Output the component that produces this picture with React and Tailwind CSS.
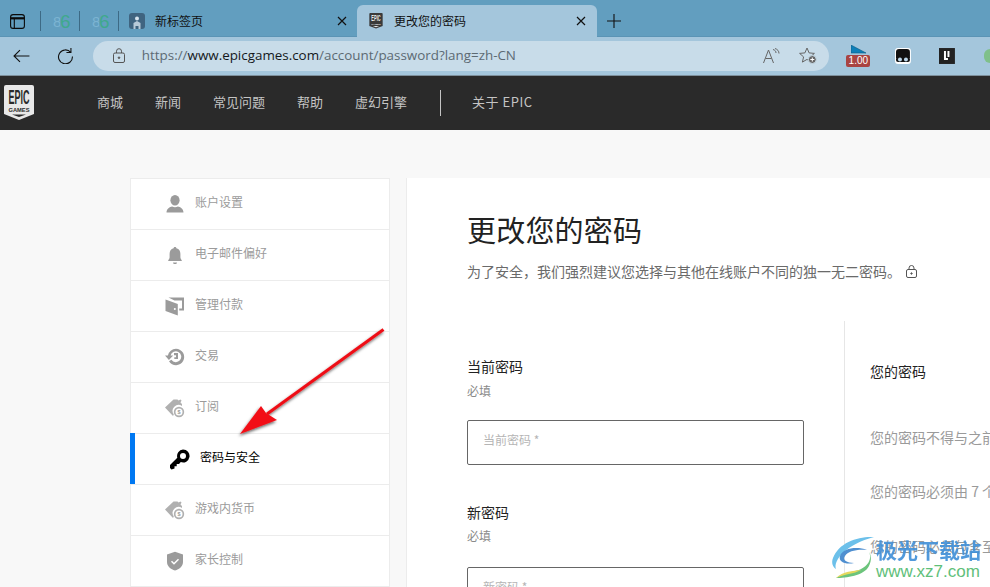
import React from "react";

const cjk = '"Noto Sans CJK SC","Liberation Sans",sans-serif';

function EpicLogo({ w = 30, h = 36, dark = false }) {
  const bg = dark ? "#3a3a3a" : "#e8e8e8";
  const fg = dark ? "#e8e8e8" : "#2a2a2a";
  return (
    <svg width={w} height={h} viewBox="0 0 30 36" className="block">
      <path d="M2 0h26a2 2 0 0 1 2 2v27l-15 6-15-6V2a2 2 0 0 1 2-2z" fill={bg} />
      <text x="15" y="19" textAnchor="middle" fontFamily="Liberation Sans" fontWeight="700" fontSize="20" textLength="21" lengthAdjust="spacingAndGlyphs" fill={fg}>EPIC</text>
      <text x="15" y="26.500" textAnchor="middle" fontFamily="Liberation Sans" fontWeight="700" fontSize="5.500" textLength="21" lengthAdjust="spacingAndGlyphs" fill={fg}>GAMES</text>
      <path d="M8 29.500h14l-7 2.600z" fill={fg} />
    </svg>
  );
}

const Ic = ({ children, w = 20, h = 20 }) => (
  <svg width={w} height={h} viewBox="0 0 20 20" fill="#9b9b9b" className="block">{children}</svg>
);

const UserIc = () => (
  <Ic>
    <ellipse cx="10" cy="6.200" rx="4.600" ry="5.200" />
    <path d="M1.500 18.500c0-4 3.400-5.600 5.600-6.100 1.800 1.100 4 1.100 5.800 0 2.200.5 5.600 2.100 5.600 6.100z" />
  </Ic>
);
const BellIc = () => (
  <Ic>
    <path d="M10 2c.8 0 1.300.5 1.400 1.200 2.800.7 4 3 4 5.600v3.400c0 1.600 1 2.300 1.400 3.300v.6H3.200v-.6c.4-1 1.400-1.700 1.400-3.300V8.800c0-2.600 1.200-4.900 4-5.600C8.700 2.500 9.200 2 10 2z" />
    <path d="M8 17.600h4c0 1-.9 1.500-2 1.500s-2-.5-2-1.500z" />
  </Ic>
);
const WalletIc = () => (
  <Ic>
    <path d="M.5 3.500 12.800 8v11.500L.5 15z" />
    <circle cx="9.800" cy="13" r="1" fill="#fff" />
    <path d="M3.500 1.500H19v13h-4.800v-2H17V4.500H9.500z" />
    <path d="M12 5.500h5v1h-3z" fill="#fff" />
  </Ic>
);
const HistoryIc = () => (
  <Ic>
    <path d="M11 1.800a8.200 8.200 0 1 1-7 12.500l2.400-1.500A5.400 5.400 0 1 0 5.600 8.500h2.600L3.900 13 0 8.500h2.900A8.200 8.200 0 0 1 11 1.800z" />
    <path d="M9 6h4v6H9.300v-1.800h1.700V8.200H9z" />
  </Ic>
);
const TicketIc = () => (
  <Ic>
    <path d="M0 9.500 8.500 1.500h4l1 1 2-1 1 1-1 2 1.500 1.500v2a6 6 0 0 0-8.200 8.500L8 18z" fill="#b0b0b0" />
    <circle cx="14" cy="14" r="5.200" fill="#b0b0b0" />
    <circle cx="14" cy="14" r="3.500" fill="#fff" />
    <text x="14" y="16" textAnchor="middle" fontSize="5.500" fontWeight="700" fontFamily="Liberation Sans" fill="#9b9b9b">$</text>
  </Ic>
);
const ShieldIc = () => (
  <Ic>
    <path d="M10 .8 18 3.500v7.500c0 4.500-3.800 7.200-8 8.500-4.200-1.300-8-4-8-8.500V3.500z" />
    <path d="m6.500 10.300 2.500 2.400 4.500-4.400" stroke="#fff" strokeWidth="1.500" fill="none" />
  </Ic>
);
const KeyIc = () => (
  <svg width="21" height="21" viewBox="0 0 21 21" className="block">
    <path fillRule="evenodd" fill="#000" d="M14 .5a6.500 6.500 0 1 1-2.200 12.600l-1.800 1.900H7.700v2.200H5.500v2.300L2.500 20.500 1 19v-3l7.300-7.300A6.500 6.500 0 0 1 14 .5zm0 3.500a3 3 0 1 0 0 6 3 3 0 0 0 0-6z" />
  </svg>
);

const rows = [
  { t: "账户设置", i: <UserIc /> },
  { t: "电子邮件偏好", i: <BellIc /> },
  { t: "管理付款", i: <WalletIc /> },
  { t: "交易", i: <HistoryIc /> },
  { t: "订阅", i: <TicketIc /> },
  { t: "密码与安全", i: <KeyIc />, active: true },
  { t: "游戏内货币", i: <TicketIc /> },
  { t: "家长控制", i: <ShieldIc /> },
];

function Favicon6() {
  return (
    <span className="flex w-[16px] items-center leading-none" style={{ fontFamily: "Liberation Sans" }}>
      <span className="text-[15px] leading-none text-[#7cb4d2] w-[7px] overflow-hidden">8</span>
      <span className="text-[19px] leading-none text-[#3fa98c] w-[9px]">6</span>
    </span>
  );
}

function Close({ size = 10 }) {
  return (
    <svg width={size} height={size} viewBox="0 0 10 10" stroke="#111" strokeWidth="1.200" className="block">
      <path d="m1 1 8 8M9 1l-8 8" />
    </svg>
  );
}

export default function App() {
  return (
    <div lang="zh-CN" className="relative w-[990px] h-[587px] overflow-hidden bg-[#f8f8f8] flex flex-col" style={{ fontFamily: cjk }}>
      {/* Tab strip */}
      <div className="h-[37px] shrink-0 bg-[#629ebf] flex items-end pl-[10px] shadow-[inset_0_-1px_0_#5b94b5]">
        <div className="h-[37px] flex items-center pt-[5px]">
          <svg width="15" height="15" viewBox="0 0 15 15" fill="none" stroke="#0a0a0a" strokeWidth="1.100" className="block">
            <rect x=".6" y=".6" width="13.800" height="13.800" rx="2.500" />
            <path d="M.6 4.300h13.800" strokeWidth="2.200" />
            <path d="M4.300 4v10.400" />
          </svg>
          <div className="w-px h-[20px] bg-[#3d6a85] ml-[15px]" />
          <div className="ml-[12px]"><Favicon6 /></div>
          <div className="w-px h-[20px] bg-[#3d6a85] ml-[10px]" />
          <div className="ml-[12px]"><Favicon6 /></div>
          <div className="w-px h-[20px] bg-[#3d6a85] ml-[10px]" />
          <svg width="16" height="16" viewBox="0 0 16 16" className="block ml-[10px]">
            <rect width="16" height="16" rx="3" fill="#3f6480" />
            <circle cx="8" cy="5.500" r="2" fill="#d6e4ee" />
            <path d="M4.500 16V10l3.500-2 3.500 2v6h-2v-3h-3v3z" fill="#d6e4ee" opacity=".8" />
          </svg>
          <span className="ml-[10px] text-[12px] leading-none text-[#111]">新标签页</span>
          <span className="ml-[134px]"><Close /></span>
        </div>
        <div className="ml-[10px] w-[240px] h-[32px] bg-[#a4c6dc] rounded-t-[6px] flex items-center pl-[12px]">
          <EpicLogo w={14} h={16} dark />
          <span className="ml-[11px] text-[12px] leading-none text-[#111]">更改您的密码</span>
          <span className="ml-auto mr-[11px]"><Close /></span>
        </div>
        <div className="h-[37px] flex items-center pt-[5px] ml-[10px]">
          <svg width="14" height="14" viewBox="0 0 14 14" stroke="#111" strokeWidth="1.100" className="block"><path d="M7 0v14M0 7h14" /></svg>
        </div>
      </div>

      {/* Address bar */}
      <div className="h-[39px] shrink-0 bg-[#a4c6dc] flex items-center border-b border-[#7d8f9b] pb-px">
        <svg width="17" height="14" viewBox="0 0 17 14" fill="none" stroke="#111" strokeWidth="1.100" className="block ml-[13px]"><path d="M16.500 7H1M7 1 1 7l6 6" /></svg>
        <svg width="17" height="17" viewBox="0 0 17 17" fill="none" stroke="#111" strokeWidth="1.100" className="block ml-[27px]"><path d="M14 1v4.500H9.500M13.800 5.300A7 7 0 1 0 15.500 9.500" /></svg>
        <div className="ml-[19px] w-[740px] h-[30px] rounded-full bg-[#c8dce9] flex items-center pl-[20px]">
          <svg width="12" height="15" viewBox="0 0 12 15" fill="none" stroke="#555" strokeWidth="1" className="block">
            <rect x=".5" y="5" width="11" height="9.500" rx="1.500" />
            <path d="M3.500 5V3.200a2.500 2.500 0 0 1 5 0V5" />
            <circle cx="6" cy="9.700" r=".8" fill="#555" />
          </svg>
          <span className="ml-[17px] mt-[1px] text-[13.400px] leading-none text-[#5c6a73]" style={{ fontFamily: '"Open Sans",sans-serif' }}>
            https://<span className="text-[#14181b]">www.epicgames.com</span>/account/password?lang=zh-CN
          </span>
          <svg width="17" height="16" viewBox="0 0 17 16" fill="none" stroke="#666" strokeWidth="1" className="block ml-auto">
            <path d="M.5 15 5.500 2l5 13M2.500 10.500h6" />
            <path d="M10 1.500c2 .5 3 1.800 3 3.500M12 .5c2.500.8 4 2.500 4 5" />
          </svg>
          <svg width="18" height="17" viewBox="0 0 18 17" fill="none" stroke="#666" strokeWidth="1" className="block ml-[19px] mr-[12px]">
            <path d="M8 1l2.100 4.900 5.300.5-4 3.500 1.200 5.200L8 12.400l-4.600 2.700 1.200-5.200-4-3.500 5.300-.5z" strokeLinejoin="round" />
            <circle cx="13.300" cy="12.500" r="4" fill="#666" stroke="#c8dce9" />
            <path d="M13.300 10.500v4M11.300 12.500h4" stroke="#fff" />
          </svg>
        </div>
        <div className="relative ml-[17px] w-[25px] h-[22px]">
          <svg width="16" height="14" viewBox="0 0 16 14" className="block ml-[5px]"><path d="M0 0 15 8H0z" fill="#0e7fb8" stroke="#0a5c85" strokeWidth=".6" /></svg>
          <span className="absolute left-0 top-[10px] w-[24px] h-[12px] rounded-[2px] bg-[#a94442] text-white text-[10px] leading-[12px] text-center" style={{ fontFamily: "Liberation Sans" }}>1.00</span>
        </div>
        <svg width="16" height="16" viewBox="0 0 16 16" className="block ml-[24px]">
          <rect width="16" height="16" rx="3" fill="#fff" />
          <path d="M1 4a3 3 0 0 1 3-3h8a3 3 0 0 1 3 3v6H1z" fill="#111" />
          <rect x="1" y="9" width="14" height="5" rx="2" fill="#111" />
          <circle cx="5" cy="11.500" r="2" fill="#bcd7ea" /><circle cx="11" cy="11.500" r="2" fill="#bcd7ea" />
        </svg>
        <svg width="16" height="16" viewBox="0 0 16 16" className="block ml-[28px]">
          <rect width="16" height="16" fill="#222" />
          <path d="M5 3h2v7h2v2H5zM8.500 3h2v6h-2z" fill="#fff" />
        </svg>
        <div className="ml-[29px] w-[6px] h-[14px] bg-[#7fc08a] rounded-l-full" />
      </div>

      {/* Site nav */}
      <div className="h-[54px] shrink-0 bg-[#2a2a2a] flex items-center text-[13px] text-[#c4c4c4] pb-[2px]">
        <div className="ml-[4px] w-[30px] mt-[2px]"><EpicLogo /></div>
        <div className="ml-[63px] flex items-center gap-[32px]">
          <span>商城</span><span>新闻</span><span>常见问题</span><span>帮助</span><span>虚幻引擎</span>
        </div>
        <div className="ml-[33px] w-px h-[26px] bg-[#c4c4c4] mt-[2px]" />
        <span className="ml-[31px] tracking-[0.5px]">关于 EPIC</span>
      </div>

      {/* Body */}
      <div className="flex-1 flex items-start pt-[48px] pl-[130px] gap-[16px] min-h-0">
        <div className="w-[260px] shrink-0 bg-white border border-[#ececec]">
          {rows.map((r, idx) => (
            <div key={r.t} className={`relative flex items-center text-[12px] ${idx ? "h-[51px] border-t border-[#ececec]" : "h-[50px]"} ${r.active ? "text-black" : "text-[#9b9b9b]"}`}>
              {r.active && <div className="absolute -left-px -top-px bottom-0 w-[5px] bg-[#0078f2]" />}
              <div className={`flex items-center ${r.active ? "pl-[38px]" : "pl-[34px]"}`}>
                {r.i}
                <span className="ml-[10px] mb-[4px]">{r.t}</span>
              </div>
            </div>
          ))}
        </div>

        <div className="flex-1 self-stretch bg-white border-l border-[#ececec] pl-[60px] overflow-hidden">
          <h1 className="mt-[30px] text-[29px] leading-[42px] font-normal tracking-[0.2px] text-[#222]">更改您的密码</h1>
          <p className="mt-[11px] text-[14px] leading-[20px] text-[#6a6a6a] flex items-center whitespace-nowrap">
            <span>{"为了安全\uFF0C我们强烈建议您选择与其他在线账户不同的独一无二密码。"}</span>
            <svg width="11" height="13" viewBox="0 0 11 13" fill="none" stroke="#555" strokeWidth="1" className="block ml-[5px]">
              <rect x=".5" y="4.500" width="10" height="8" rx="1.500" />
              <path d="M3 4.500V3a2.500 2.500 0 0 1 5 0v1.500" />
              <circle cx="5.500" cy="8.500" r=".7" fill="#555" />
            </svg>
          </p>
          <div className="mt-[40px] flex items-stretch">
            <div className="w-[377px] shrink-0 pt-[35px] pr-[40px]">
              <div className="text-[14px] leading-[20px] text-[#222]">当前密码</div>
              <div className="mt-[7px] text-[12px] leading-[16px] text-[#8a8a8a]">必填</div>
              <div className="mt-[21px] h-[45px] border border-[#666] rounded-[2px] flex items-center pl-[15px] pb-[6px] text-[12px] text-[#b5b5b5]">当前密码 *</div>
              <div className="mt-[37px] text-[14px] leading-[20px] text-[#222]">新密码</div>
              <div className="mt-[6px] text-[12px] leading-[16px] text-[#8a8a8a]">必填</div>
              <div className="mt-[23px] h-[45px] border border-[#666] rounded-[2px] flex items-center pl-[15px] pb-[6px] text-[12px] text-[#b5b5b5]">新密码 *</div>
            </div>
            <div className="flex-1 min-w-0 border-l border-[#e6e6e6] pl-[25px] pt-[40px] whitespace-nowrap">
              <div className="text-[14px] leading-[20px] text-[#222]">您的密码</div>
              <div className="mt-[46px] text-[14px] leading-[20px] text-[#9a9a9a]">您的密码不得与之前</div>
              <div className="mt-[34px] text-[14px] leading-[20px] text-[#9a9a9a]">您的密码必须由 7 个</div>
              <div className="mt-[35px] text-[14px] leading-[20px] text-[#9a9a9a]">您的密码必须包含至</div>
            </div>
          </div>
        </div>
      </div>

      {/* Red annotation arrow */}
      <svg width="160" height="120" viewBox="0 0 160 120" className="absolute left-[235px] top-[322px] block pointer-events-none">
        <defs>
          <filter id="arrowShadow" x="-20%" y="-20%" width="140%" height="140%">
            <feDropShadow dx="-1" dy="2" stdDeviation="1.500" floodColor="#000" floodOpacity=".6" />
          </filter>
        </defs>
        <g filter="url(#arrowShadow)">
          <path d="M148.500 7.500 32 92" stroke="#ee1016" strokeWidth="3" fill="none" />
          <path d="M5 112 26 84l5 7 11 7z" fill="#f20d14" />
        </g>
      </svg>

      {/* Watermark */}
      <div className="absolute left-[831px] top-[536px] flex items-start pointer-events-none">
        <svg width="44" height="42" viewBox="0 0 44 42" className="block">
          <path d="M43 1C28 0 8 6 2 22c-2 5 0 9 3 11C2 24 16 8 43 1z" fill="#6cc0ea" />
          <path d="M36 14c-10-4-24-2-27 6-2 6 6 9 14 7-7 0-12-3-9-7 3-5 12-7 22-6z" fill="#4f8fd0" />
          <path d="M38 16c4 8-3 17-14 19-9 2-14 4-19 7 10 0 28-2 33-12 3-6 2-11 0-14z" fill="#6cc47c" />
          <path d="M5 42c8-4 18-4 25-8-8 1-18 1-25 8z" fill="#e6d85c" />
        </svg>
        <div className="ml-[1px] flex flex-col">
          <span className="text-[21px] leading-[26px] font-bold text-[#3f8fd8] opacity-90">极光下载站</span>
          <span className="mt-[1px] text-[17px] leading-[18px] text-[#5fc07a]" style={{ fontFamily: "Liberation Sans" }}>www.xz7.com</span>
        </div>
      </div>
    </div>
  );
}
